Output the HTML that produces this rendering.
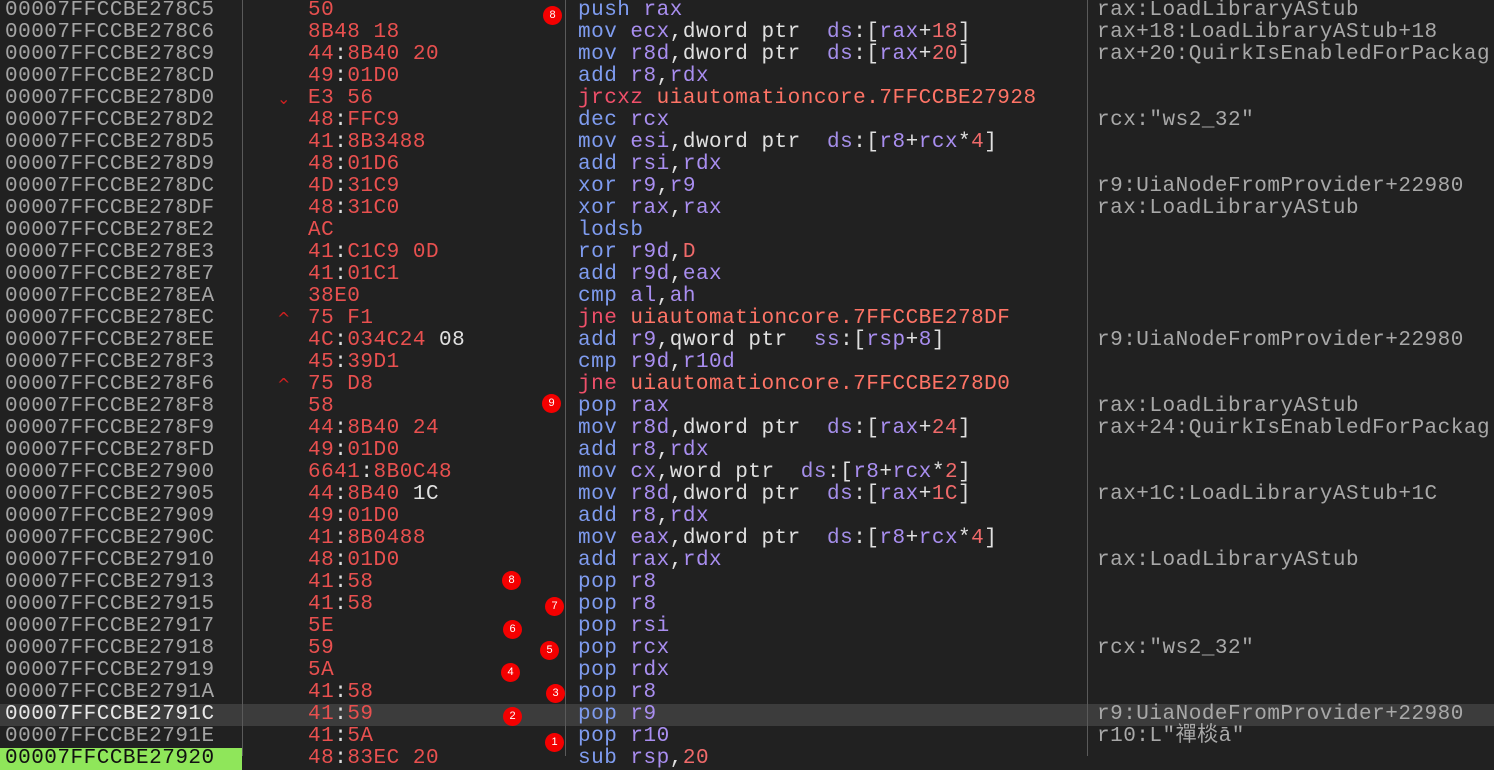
<!DOCTYPE html>
<html><head><meta charset="utf-8"><style>
body{margin:0;background:#212121;width:1494px;height:756px;overflow:hidden;position:relative;font-family:"Liberation Mono","Noto Sans CJK SC",monospace;font-size:21px;letter-spacing:0.5px}
i{font-style:normal}
.row{position:absolute;left:0;width:1494px;height:22px;line-height:22px;white-space:pre}
.row>span{position:absolute;top:0}
.a{left:5px;color:#a4a4a4}
.b{left:308px;color:#e8504f}
.d{left:578px}
.c{left:1097px;color:#a8a8a8}
.sep{position:absolute;top:0;width:1px;height:756px;background:#5a5a5a}
.m{color:#7f9cf0}.r{color:#a98ef0}.s{color:#a48ee8}.n{color:#f06a6a}.j{color:#f0506a}.t{color:#ff7466}.k{color:#e0e0e0}
.bp{position:absolute;width:19px;height:19px;border-radius:50%;background:#f40000;color:#fff;font-size:11px;letter-spacing:0;line-height:19px;text-align:center;font-family:"Liberation Sans",sans-serif}
.arr{position:absolute;left:277px;color:#d02020;font-size:16px;letter-spacing:0;font-family:"DejaVu Sans",sans-serif}
</style></head><body>
<div style="position:absolute;left:0;top:704px;width:1494px;height:22px;background:#3c3c3c"></div>
<div style="position:absolute;left:0;top:748px;width:242px;height:22px;background:#8fe65a"></div>
<div class="sep" style="left:242px"></div>
<div class="sep" style="left:565px"></div>
<div class="sep" style="left:1087px"></div>

<div class="row" style="top:0px"><span class="a">00007FFCCBE278C5</span><span class="b">50</span><span class="d"><i class="m">push</i> <i class="r">rax</i></span><span class="c">rax:LoadLibraryAStub</span></div>
<div class="row" style="top:22px"><span class="a">00007FFCCBE278C6</span><span class="b">8B48 18</span><span class="d"><i class="m">mov</i> <i class="r">ecx</i><i class="k">,dword ptr  </i><i class="s">ds</i><i class="k">:[</i><i class="r">rax</i><i class="k">+</i><i class="n">18</i><i class="k">]</i></span><span class="c">rax+18:LoadLibraryAStub+18</span></div>
<div class="row" style="top:44px"><span class="a">00007FFCCBE278C9</span><span class="b">44<i class="k">:</i>8B40 20</span><span class="d"><i class="m">mov</i> <i class="r">r8d</i><i class="k">,dword ptr  </i><i class="s">ds</i><i class="k">:[</i><i class="r">rax</i><i class="k">+</i><i class="n">20</i><i class="k">]</i></span><span class="c">rax+20:QuirkIsEnabledForPackag</span></div>
<div class="row" style="top:66px"><span class="a">00007FFCCBE278CD</span><span class="b">49<i class="k">:</i>01D0</span><span class="d"><i class="m">add</i> <i class="r">r8</i><i class="k">,</i><i class="r">rdx</i></span></div>
<div class="row" style="top:88px"><span class="a">00007FFCCBE278D0</span><span class="arr">&#x2304;</span><span class="b">E3 56</span><span class="d"><i class="j">jrcxz</i> <i class="t">uiautomationcore.7FFCCBE27928</i></span></div>
<div class="row" style="top:110px"><span class="a">00007FFCCBE278D2</span><span class="b">48<i class="k">:</i>FFC9</span><span class="d"><i class="m">dec</i> <i class="r">rcx</i></span><span class="c">rcx:"ws2_32"</span></div>
<div class="row" style="top:132px"><span class="a">00007FFCCBE278D5</span><span class="b">41<i class="k">:</i>8B3488</span><span class="d"><i class="m">mov</i> <i class="r">esi</i><i class="k">,dword ptr  </i><i class="s">ds</i><i class="k">:[</i><i class="r">r8</i><i class="k">+</i><i class="r">rcx</i><i class="k">*</i><i class="n">4</i><i class="k">]</i></span></div>
<div class="row" style="top:154px"><span class="a">00007FFCCBE278D9</span><span class="b">48<i class="k">:</i>01D6</span><span class="d"><i class="m">add</i> <i class="r">rsi</i><i class="k">,</i><i class="r">rdx</i></span></div>
<div class="row" style="top:176px"><span class="a">00007FFCCBE278DC</span><span class="b">4D<i class="k">:</i>31C9</span><span class="d"><i class="m">xor</i> <i class="r">r9</i><i class="k">,</i><i class="r">r9</i></span><span class="c">r9:UiaNodeFromProvider+22980</span></div>
<div class="row" style="top:198px"><span class="a">00007FFCCBE278DF</span><span class="b">48<i class="k">:</i>31C0</span><span class="d"><i class="m">xor</i> <i class="r">rax</i><i class="k">,</i><i class="r">rax</i></span><span class="c">rax:LoadLibraryAStub</span></div>
<div class="row" style="top:220px"><span class="a">00007FFCCBE278E2</span><span class="b">AC</span><span class="d"><i class="m">lodsb</i></span></div>
<div class="row" style="top:242px"><span class="a">00007FFCCBE278E3</span><span class="b">41<i class="k">:</i>C1C9 0D</span><span class="d"><i class="m">ror</i> <i class="r">r9d</i><i class="k">,</i><i class="n">D</i></span></div>
<div class="row" style="top:264px"><span class="a">00007FFCCBE278E7</span><span class="b">41<i class="k">:</i>01C1</span><span class="d"><i class="m">add</i> <i class="r">r9d</i><i class="k">,</i><i class="r">eax</i></span></div>
<div class="row" style="top:286px"><span class="a">00007FFCCBE278EA</span><span class="b">38E0</span><span class="d"><i class="m">cmp</i> <i class="r">al</i><i class="k">,</i><i class="r">ah</i></span></div>
<div class="row" style="top:308px"><span class="a">00007FFCCBE278EC</span><span class="arr">^</span><span class="b">75 F1</span><span class="d"><i class="j">jne</i> <i class="t">uiautomationcore.7FFCCBE278DF</i></span></div>
<div class="row" style="top:330px"><span class="a">00007FFCCBE278EE</span><span class="b">4C<i class="k">:</i>034C24 <i class="k">08</i></span><span class="d"><i class="m">add</i> <i class="r">r9</i><i class="k">,qword ptr  </i><i class="s">ss</i><i class="k">:[</i><i class="r">rsp</i><i class="k">+</i><i class="r">8</i><i class="k">]</i></span><span class="c">r9:UiaNodeFromProvider+22980</span></div>
<div class="row" style="top:352px"><span class="a">00007FFCCBE278F3</span><span class="b">45<i class="k">:</i>39D1</span><span class="d"><i class="m">cmp</i> <i class="r">r9d</i><i class="k">,</i><i class="r">r10d</i></span></div>
<div class="row" style="top:374px"><span class="a">00007FFCCBE278F6</span><span class="arr">^</span><span class="b">75 D8</span><span class="d"><i class="j">jne</i> <i class="t">uiautomationcore.7FFCCBE278D0</i></span></div>
<div class="row" style="top:396px"><span class="a">00007FFCCBE278F8</span><span class="b">58</span><span class="d"><i class="m">pop</i> <i class="r">rax</i></span><span class="c">rax:LoadLibraryAStub</span></div>
<div class="row" style="top:418px"><span class="a">00007FFCCBE278F9</span><span class="b">44<i class="k">:</i>8B40 24</span><span class="d"><i class="m">mov</i> <i class="r">r8d</i><i class="k">,dword ptr  </i><i class="s">ds</i><i class="k">:[</i><i class="r">rax</i><i class="k">+</i><i class="n">24</i><i class="k">]</i></span><span class="c">rax+24:QuirkIsEnabledForPackag</span></div>
<div class="row" style="top:440px"><span class="a">00007FFCCBE278FD</span><span class="b">49<i class="k">:</i>01D0</span><span class="d"><i class="m">add</i> <i class="r">r8</i><i class="k">,</i><i class="r">rdx</i></span></div>
<div class="row" style="top:462px"><span class="a">00007FFCCBE27900</span><span class="b">6641<i class="k">:</i>8B0C48</span><span class="d"><i class="m">mov</i> <i class="r">cx</i><i class="k">,word ptr  </i><i class="s">ds</i><i class="k">:[</i><i class="r">r8</i><i class="k">+</i><i class="r">rcx</i><i class="k">*</i><i class="n">2</i><i class="k">]</i></span></div>
<div class="row" style="top:484px"><span class="a">00007FFCCBE27905</span><span class="b">44<i class="k">:</i>8B40 <i class="k">1C</i></span><span class="d"><i class="m">mov</i> <i class="r">r8d</i><i class="k">,dword ptr  </i><i class="s">ds</i><i class="k">:[</i><i class="r">rax</i><i class="k">+</i><i class="n">1C</i><i class="k">]</i></span><span class="c">rax+1C:LoadLibraryAStub+1C</span></div>
<div class="row" style="top:506px"><span class="a">00007FFCCBE27909</span><span class="b">49<i class="k">:</i>01D0</span><span class="d"><i class="m">add</i> <i class="r">r8</i><i class="k">,</i><i class="r">rdx</i></span></div>
<div class="row" style="top:528px"><span class="a">00007FFCCBE2790C</span><span class="b">41<i class="k">:</i>8B0488</span><span class="d"><i class="m">mov</i> <i class="r">eax</i><i class="k">,dword ptr  </i><i class="s">ds</i><i class="k">:[</i><i class="r">r8</i><i class="k">+</i><i class="r">rcx</i><i class="k">*</i><i class="n">4</i><i class="k">]</i></span></div>
<div class="row" style="top:550px"><span class="a">00007FFCCBE27910</span><span class="b">48<i class="k">:</i>01D0</span><span class="d"><i class="m">add</i> <i class="r">rax</i><i class="k">,</i><i class="r">rdx</i></span><span class="c">rax:LoadLibraryAStub</span></div>
<div class="row" style="top:572px"><span class="a">00007FFCCBE27913</span><span class="b">41<i class="k">:</i>58</span><span class="d"><i class="m">pop</i> <i class="r">r8</i></span></div>
<div class="row" style="top:594px"><span class="a">00007FFCCBE27915</span><span class="b">41<i class="k">:</i>58</span><span class="d"><i class="m">pop</i> <i class="r">r8</i></span></div>
<div class="row" style="top:616px"><span class="a">00007FFCCBE27917</span><span class="b">5E</span><span class="d"><i class="m">pop</i> <i class="r">rsi</i></span></div>
<div class="row" style="top:638px"><span class="a">00007FFCCBE27918</span><span class="b">59</span><span class="d"><i class="m">pop</i> <i class="r">rcx</i></span><span class="c">rcx:"ws2_32"</span></div>
<div class="row" style="top:660px"><span class="a">00007FFCCBE27919</span><span class="b">5A</span><span class="d"><i class="m">pop</i> <i class="r">rdx</i></span></div>
<div class="row" style="top:682px"><span class="a">00007FFCCBE2791A</span><span class="b">41<i class="k">:</i>58</span><span class="d"><i class="m">pop</i> <i class="r">r8</i></span></div>
<div class="row" style="top:704px"><span class="a" style="color:#e8e8e8">00007FFCCBE2791C</span><span class="b">41<i class="k">:</i>59</span><span class="d"><i class="m">pop</i> <i class="r">r9</i></span><span class="c">r9:UiaNodeFromProvider+22980</span></div>
<div class="row" style="top:726px"><span class="a">00007FFCCBE2791E</span><span class="b">41<i class="k">:</i>5A</span><span class="d"><i class="m">pop</i> <i class="r">r10</i></span><span class="c">r10:L"禪棪ā"</span></div>
<div class="row" style="top:748px"><span class="a" style="color:#111">00007FFCCBE27920</span><span class="b">48<i class="k">:</i>83EC 20</span><span class="d"><i class="m">sub</i> <i class="r">rsp</i><i class="k">,</i><i class="n">20</i></span></div>

<div class="bp" style="left:543px;top:6px">8</div>
<div class="bp" style="left:542px;top:394px">9</div>
<div class="bp" style="left:502px;top:571px">8</div>
<div class="bp" style="left:545px;top:597px">7</div>
<div class="bp" style="left:503px;top:620px">6</div>
<div class="bp" style="left:540px;top:641px">5</div>
<div class="bp" style="left:501px;top:663px">4</div>
<div class="bp" style="left:546px;top:684px">3</div>
<div class="bp" style="left:503px;top:707px">2</div>
<div class="bp" style="left:545px;top:733px">1</div>
</body></html>
